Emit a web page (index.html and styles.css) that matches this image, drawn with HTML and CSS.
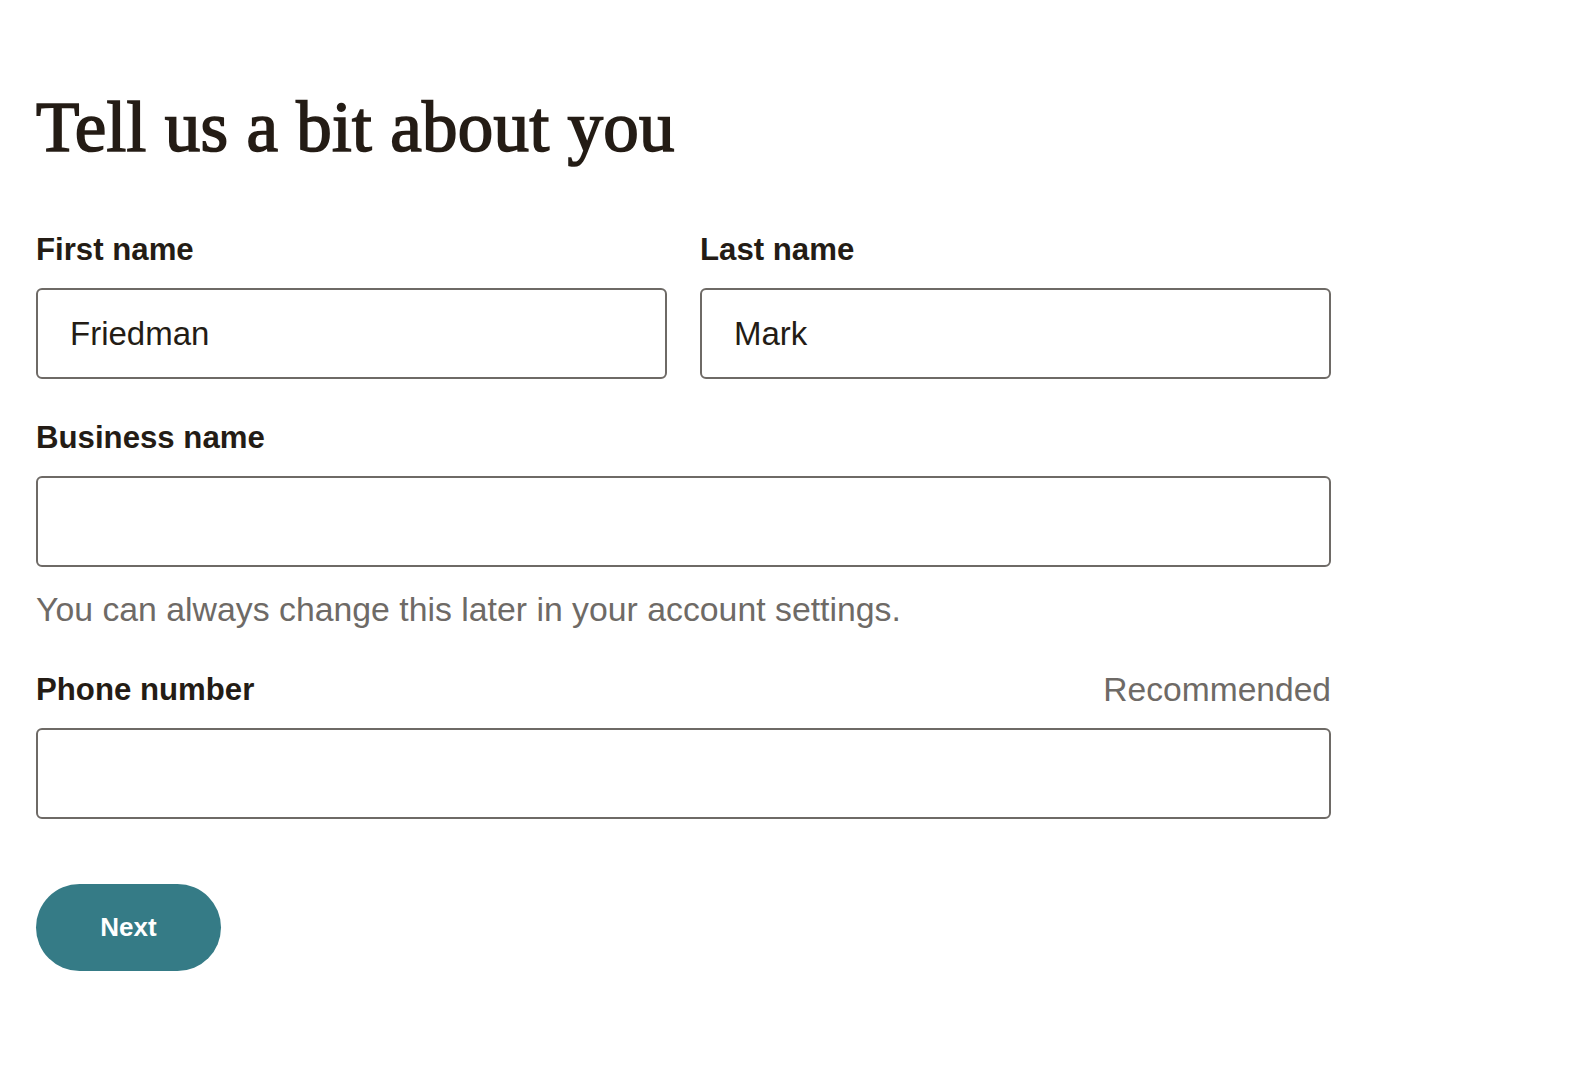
FILE: index.html
```html
<!DOCTYPE html>
<html lang="en">
<head>
<meta charset="utf-8">
<title>Tell us a bit about you</title>
<link rel="stylesheet" href="styles.css">
</head>
<body>
<main class="page">
  <h1 class="title">Tell us a bit about you</h1>
  <form class="form">
    <div class="row">
      <div class="field">
        <label class="label" for="first">First name</label>
        <input class="input" id="first" type="text" value="Friedman">
      </div>
      <div class="field">
        <label class="label" for="last">Last name</label>
        <input class="input" id="last" type="text" value="Mark">
      </div>
    </div>
    <div class="field field-help">
      <label class="label" for="biz">Business name</label>
      <input class="input" id="biz" type="text">
      <p class="help">You can always change this later in your account settings.</p>
    </div>
    <div class="field field-phone">
      <div class="label-row">
        <label class="label" for="phone">Phone number</label>
        <span class="optional">Recommended</span>
      </div>
      <input class="input" id="phone" type="text">
    </div>
    <button class="btn" type="button">Next</button>
  </form>
</main>
</body>
</html>
```

FILE: styles.css
```css
* { box-sizing: border-box; }
html, body { margin: 0; padding: 0; background: #ffffff; }
body {
  font-family: "Liberation Sans", Arial, sans-serif;
  color: #241c15;
}
.page {
  padding: 87px 0 0 36px;
  width: 1331px;
}
.title {
  margin: 0;
  font-family: "Liberation Serif", "Times New Roman", serif;
  font-weight: 400;
  font-size: 71px;
  line-height: 80px;
  letter-spacing: 0.3px;
  -webkit-text-stroke: 1.7px #241c15;
  color: #241c15;
}
.form {
  margin-top: 61px;
  display: flex;
  flex-direction: column;
}
.row {
  display: flex;
  gap: 33px;
}
.row .field { flex: 1; }
.field { display: flex; flex-direction: column; margin-bottom: 37px; }
.label {
  display: block;
  font-weight: 700;
  font-size: 31.2px;
  line-height: 40px;
  padding-top: 2px;
  margin-bottom: 18px;
  color: #241c15;
}
.label-row {
  display: flex;
  justify-content: space-between;
  align-items: flex-start;
}
.optional {
  font-size: 33.6px;
  line-height: 40px;
  padding-top: 2px;
  color: #6e6a66;
}
.input {
  display: block;
  width: 100%;
  height: 91px;
  border: 2px solid #6e6a66;
  border-radius: 6px;
  padding: 0 32px;
  font-family: "Liberation Sans", Arial, sans-serif;
  font-size: 33px;
  color: #241c15;
  background: #fff;
  outline: none;
}
.help {
  margin: 22px 0 0 0;
  font-size: 33.8px;
  line-height: 40px;
  color: #6e6a66;
}
.field-help { margin-bottom: 39px; }
.field-phone { margin-bottom: 0; }
.btn {
  margin-top: 65px;
  width: 185px;
  height: 87px;
  border: none;
  border-radius: 44px;
  background: #357b86;
  color: #ffffff;
  font-family: "Liberation Sans", Arial, sans-serif;
  font-weight: 700;
  font-size: 26px;
  cursor: pointer;
  padding: 0;
}
```
